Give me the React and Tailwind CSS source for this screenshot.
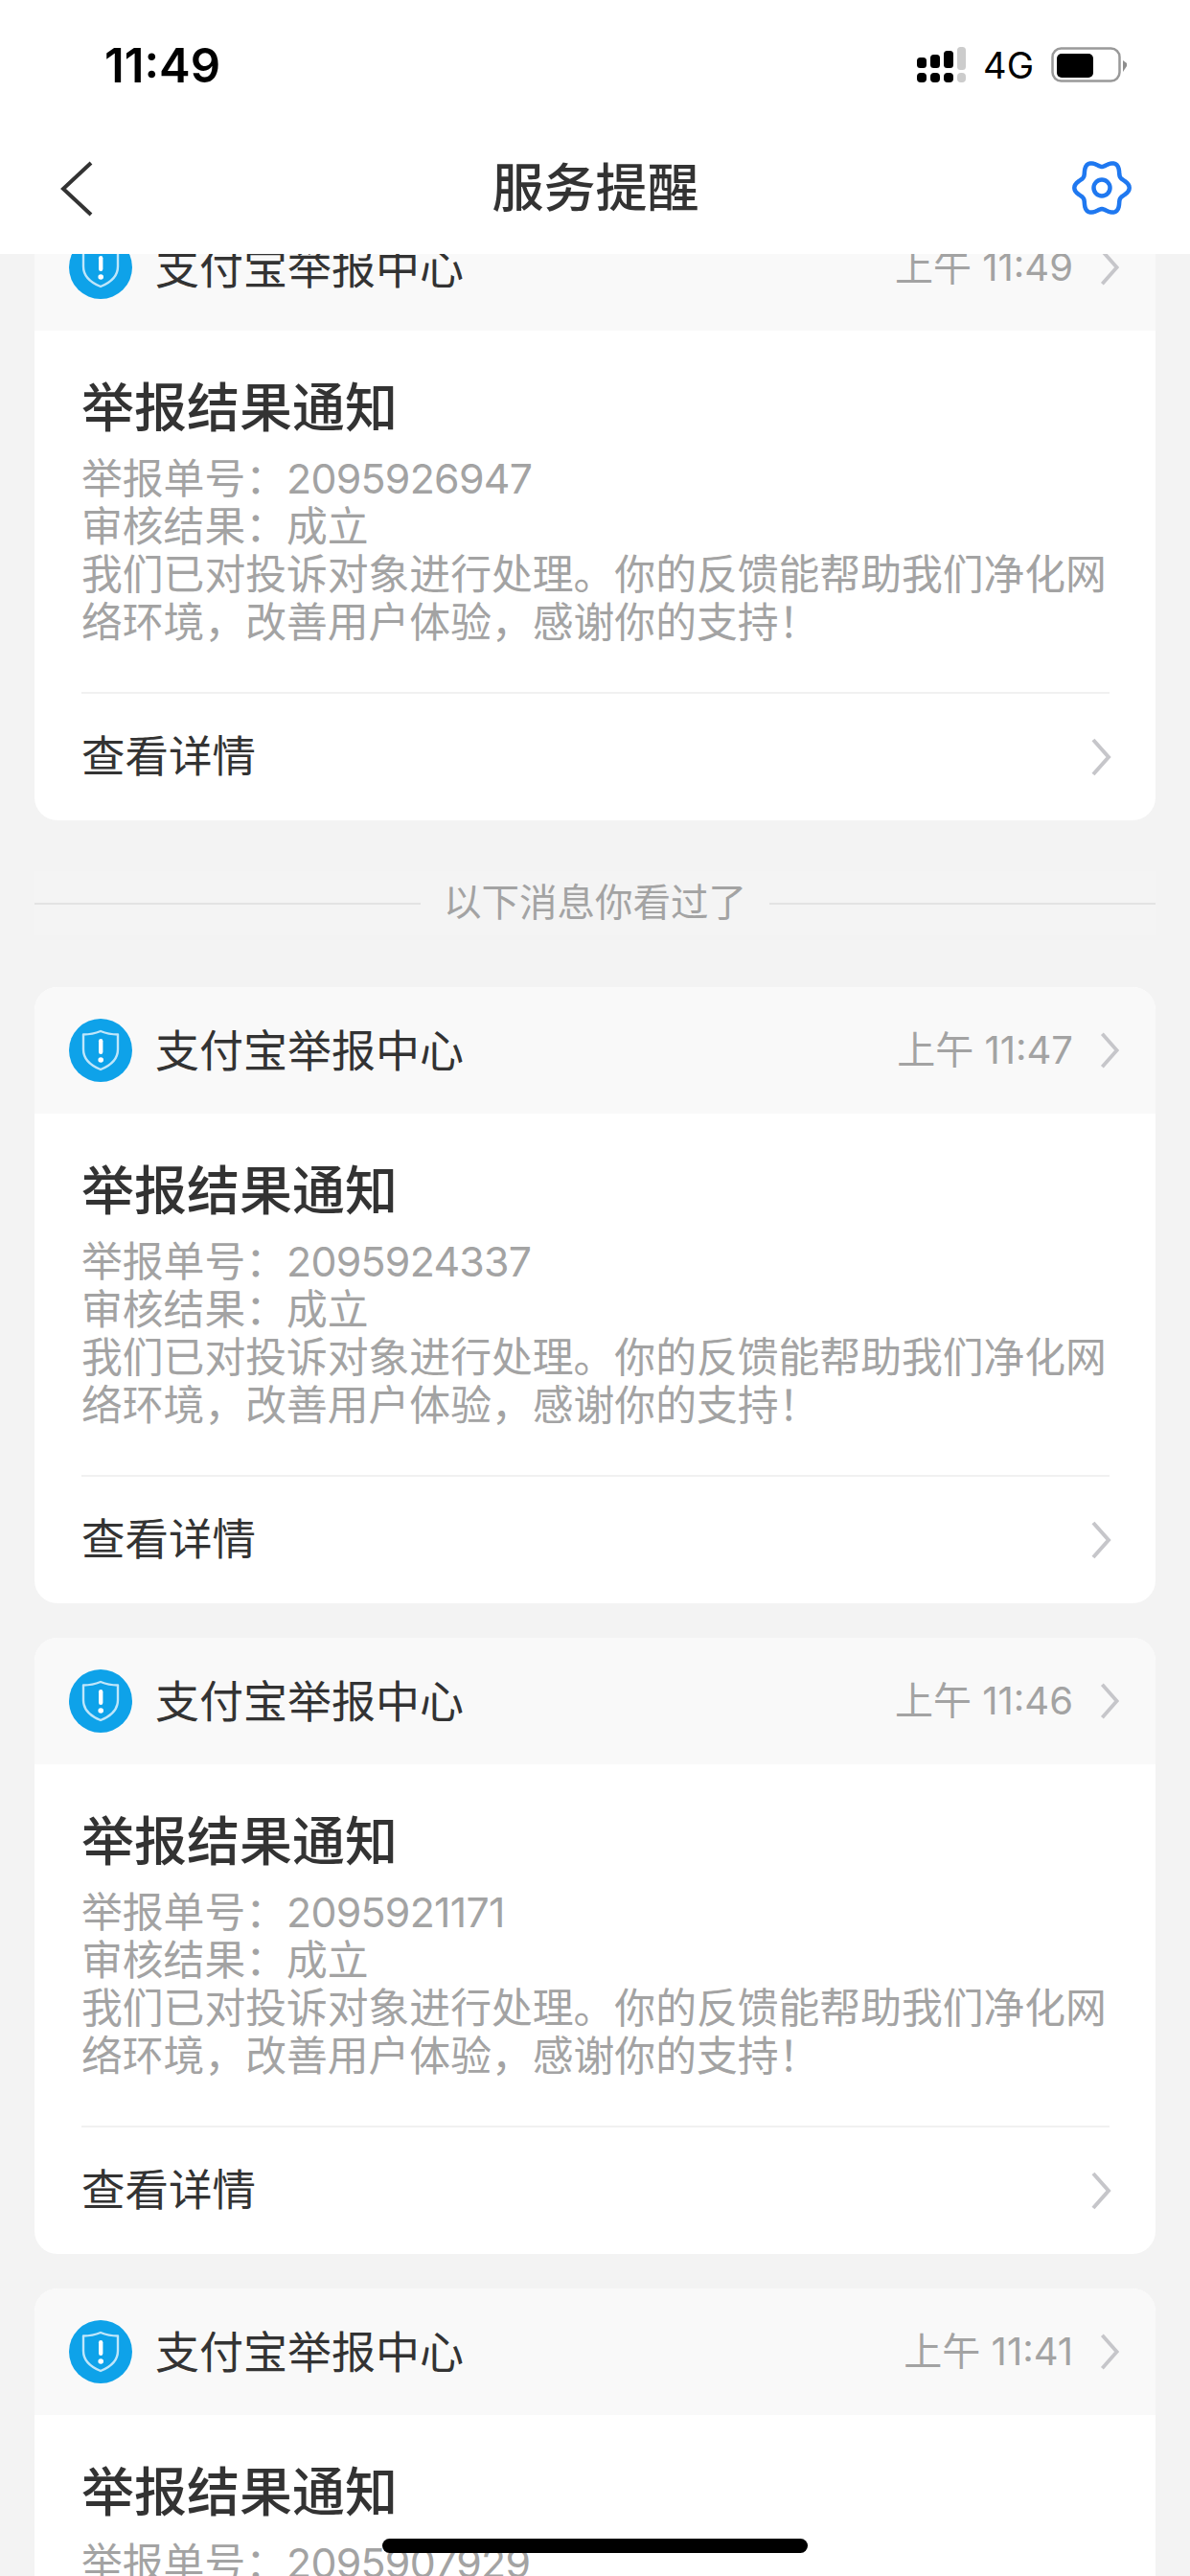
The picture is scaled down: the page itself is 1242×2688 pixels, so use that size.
import React from 'react';

const cjk = "font-['Inter','Noto_Sans_CJK_SC',sans-serif]";

const reports = [
    { id: '2095926947', time: '上午 11:49' },
    { id: '2095924337', time: '上午 11:47', seenBefore: true },
    { id: '2095921171', time: '上午 11:46' },
    { id: '2095907929', time: '上午 11:41' },
];

// six soft lobes, same outline as the settings gear
const gearPath = () => {
    const pts = [];
    for (let i = 0; i < 96; i++) {
        const a = (i / 96) * Math.PI * 2;
        const r = 25.4 + 3.3 * Math.cos(6 * a);
        pts.push(`${(30 + r * Math.cos(a)).toFixed(2)} ${(29 + r * Math.sin(a)).toFixed(2)}`);
    }
    return `M${pts.join('L')}Z`;
};

const Chevron = ({ className }) => (
    <svg className={className} viewBox="0 0 24 42" fill="none">
        <path d="M4 3L20 21L4 39" stroke="#c6c6ca" strokeWidth="4" />
    </svg>
);

const SignalIcon = () => (
    <svg width="52" height="38" viewBox="0 0 52 38" className="mr-[17px]">
        <rect x="0" y="11" width="10" height="11" rx="3.5" fill="#000" />
        <rect x="14" y="8" width="10" height="14" rx="3.5" fill="#000" />
        <rect x="28" y="4" width="10" height="18" rx="3.5" fill="#000" />
        <rect x="42" y="0" width="9" height="24" rx="3.5" fill="#cccccc" />
        <rect x="0" y="27" width="10" height="10" rx="4" fill="#000" />
        <rect x="14" y="27" width="10" height="10" rx="4" fill="#000" />
        <rect x="28" y="27" width="10" height="10" rx="4" fill="#000" />
        <rect x="42" y="27" width="9" height="10" rx="4" fill="#cccccc" />
    </svg>
);

const BatteryIcon = () => (
    <svg width="80" height="38" viewBox="0 0 80 38">
        <rect x="1.5" y="1.5" width="70" height="34" rx="9" fill="none" stroke="#999" strokeWidth="2.5" />
        <rect x="6" y="7" width="38" height="25" rx="5" fill="#000" />
        <path d="M75 14L79 17V20L75 26Z" fill="#8e8e8e" />
    </svg>
);

const ShieldBadge = () => (
    <div className="flex h-[66px] w-[66px] shrink-0 items-center justify-center rounded-full bg-[#0ea2e9]">
        <svg width="40" height="44" viewBox="0 0 40 44" fill="none">
            <path
                d="M20 2C26 4.5 32 5.5 38 5.5V21C38 31 30 38 20 42C10 38 2 31 2 21V5.5C8 5.5 14 4.5 20 2Z"
                stroke="#bfe6fa"
                strokeWidth="2.4"
                strokeLinejoin="round"
            />
            <rect x="18" y="10" width="4.4" height="16" rx="2.2" fill="#fff" />
            <circle cx="20.2" cy="32" r="2.8" fill="#fff" />
        </svg>
    </div>
);

const ReportCard = ({ report }) => (
    <div className="overflow-hidden rounded-[24px] bg-white">
        <div className="flex h-[132px] items-center bg-[#f9f9f9] px-[36px]">
            <ShieldBadge />
            <span className="ml-[24px] text-[46px] leading-none text-[#333]">支付宝举报中心</span>
            <span className="ml-auto text-[40px] leading-none text-[#a3a3a3]">{report.time}</span>
            <Chevron className="ml-[26px] h-[40px] w-[24px]" />
        </div>
        <div className="pl-[49px] pr-[48px] pt-[50px]">
            <div className="text-[55px] font-medium leading-[60px] text-[#333]">举报结果通知</div>
            <div className="mt-[20px] text-[42.8px] leading-[50px] text-[#a3a3a3]">
                <div>
                    举报单号：<span className="tracking-[-0.7px]">{report.id}</span>
                </div>
                <div>审核结果：成立</div>
                <div>我们已对投诉对象进行处理。你的反馈能帮助我们净化网络环境，改善用户体验，感谢你的支持！</div>
            </div>
            <div className="mt-[47px] flex h-[134px] items-center border-t-2 border-[#f1f1f1]">
                <span className="text-[45.5px] leading-none text-[#333]">查看详情</span>
                <Chevron className="-mr-[3px] ml-auto h-[42px] w-[24px]" />
            </div>
        </div>
    </div>
);

const SeenDivider = () => (
    <div className="mb-[54px] mt-[53px] flex h-[67px] items-center bg-[#f4f4f4]">
        <div className="h-[2px] flex-1 bg-[#e3e3e3]" />
        <span className="mx-[24px] text-[39.5px] leading-none text-[#a3a3a3]">以下消息你看过了</span>
        <div className="h-[2px] flex-1 bg-[#e3e3e3]" />
    </div>
);

const App = () => {
    return (
        <div className={`relative flex h-[2688px] w-[1242px] flex-col overflow-hidden bg-[#f3f3f3] ${cjk}`}>
            <header className="relative z-10 h-[265px] shrink-0 bg-white">
                <div className="flex h-[136px] items-center pl-[109px] pr-[65px]">
                    <span className="text-[49px] font-semibold leading-none text-black">11:49</span>
                    <div className="ml-auto flex items-center">
                        <SignalIcon />
                        <span className="mr-[18px] text-[38px] leading-none text-black">4G</span>
                        <BatteryIcon />
                    </div>
                </div>
                <div className="flex h-[122px] items-center pl-[63px] pr-[62px]">
                    <div className="flex-1">
                        <svg width="34" height="58" viewBox="0 0 34 58" fill="none">
                            <path d="M32 2L3 29L32 56" stroke="#333" strokeWidth="4" />
                        </svg>
                    </div>
                    <h1 className="text-[54px] font-medium leading-none text-[#333]">服务提醒</h1>
                    <div className="flex flex-1 justify-end">
                        <svg width="60" height="60" viewBox="0 0 60 60" fill="none" className="overflow-visible">
                            <path d={gearPath()} stroke="#1f78f0" strokeWidth="4.5" strokeLinejoin="round" />
                            <circle cx="30" cy="29" r="8.5" stroke="#1f78f0" strokeWidth="4.5" />
                        </svg>
                    </div>
                </div>
            </header>

            <main className="min-h-0 flex-1 overflow-hidden px-[36px]">
                <div className="-mt-[52px] flex flex-col">
                    {reports.map((report, i) => (
                        <React.Fragment key={report.id}>
                            {report.seenBefore && <SeenDivider />}
                            <div className={i > 0 && !report.seenBefore ? 'mt-[36px]' : ''}>
                                <ReportCard report={report} />
                            </div>
                        </React.Fragment>
                    ))}
                </div>
            </main>

            {/* home indicator */}
            <div className="absolute bottom-[24px] left-[399px] h-[15px] w-[444px] rounded-full bg-black" />
        </div>
    );
};

export default App;
